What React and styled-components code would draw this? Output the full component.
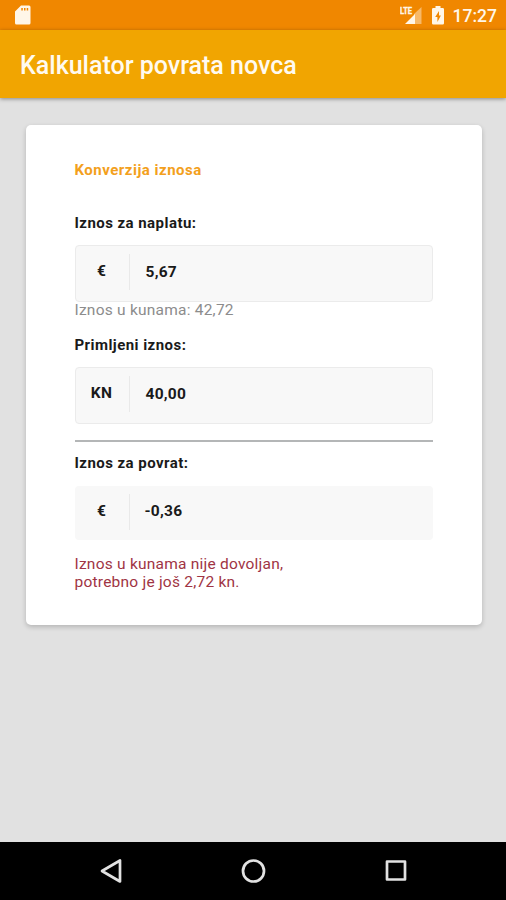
import * as React from 'react';
import styled, { createGlobalStyle } from 'styled-components';

const theme = {
  colors: {
    statusBar: '#f08700',
    appBar: '#f1a501',
    background: '#e1e1e1',
    accent: '#f3a01c',
    text: '#1a1a1a',
    muted: '#8c8c8c',
    error: '#a03444',
    field: '#f8f8f8',
    border: '#ebebeb',
  },
};

const GlobalStyle = createGlobalStyle`
  * {
    box-sizing: border-box;
  }

  body {
    margin: 0;
    font-family: Roboto, 'Liberation Sans', sans-serif;
  }
`;

const Screen = styled.div`
  display: flex;
  flex-direction: column;
  width: 506px;
  height: 900px;
  overflow: hidden;
  background: ${theme.colors.background};
`;

const StatusBar = styled.div`
  display: flex;
  align-items: center;
  flex: 0 0 30px;
  padding: 0 9px 0 15px;
  color: #fff6e8;
  background: ${theme.colors.statusBar};

  svg {
    display: block;
  }
`;

const StatusIcons = styled.div`
  display: flex;
  align-items: center;
  gap: 10px;
  margin-left: auto;
`;

const Clock = styled.span`
  margin-left: -1px;
  padding-top: 2px;
  font-size: 17.5px;
  font-weight: 500;
  line-height: 20px;
`;

const AppBar = styled.header`
  display: flex;
  align-items: center;
  flex: 0 0 68px;
  padding: 4px 20px 0;
  background: ${theme.colors.appBar};
  box-shadow: 0 1px 4px rgba(0, 0, 0, 0.4);
`;

const AppTitle = styled.h1`
  margin: 0;
  color: #fffaf0;
  font-size: 25px;
  font-weight: 500;
  line-height: 30px;
  white-space: nowrap;
`;

const Content = styled.main`
  flex: 1;
  padding: 27px 24px 0 26px;
`;

const Card = styled.section`
  height: 500px;
  padding: 35px 49px 0 48.5px;
  border-radius: 5px;
  background: #fff;
  box-shadow: 0 2px 5px rgba(0, 0, 0, 0.2);
`;

const CardTitle = styled.h2`
  margin: 0 0 33px;
  color: ${theme.colors.accent};
  font-size: 15px;
  font-weight: 700;
  letter-spacing: 0.5px;
  line-height: 20px;
`;

const Label = styled.label`
  display: block;
  margin-bottom: ${({ $gap }) => $gap || 12}px;
  color: ${theme.colors.text};
  font-size: 15px;
  font-weight: 700;
  letter-spacing: 0.45px;
  line-height: 20px;
`;

const Field = styled.div`
  display: flex;
  align-items: center;
  height: ${({ $plain }) => ($plain ? 54 : 57)}px;
  padding-bottom: ${({ $plain }) => ($plain ? 2 : 3)}px;
  border: 1px solid
    ${({ $plain }) => ($plain ? 'transparent' : theme.colors.border)};
  border-radius: 4px;
  background: ${theme.colors.field};
  color: ${theme.colors.text};
  font-size: 15.5px;
  font-weight: 700;
  letter-spacing: 0.25px;
`;

const Currency = styled.span`
  display: flex;
  align-items: center;
  justify-content: center;
  width: 54px;
  height: 36px;
  padding-bottom: ${({ $plain }) => ($plain ? 3 : 2)}px;
  padding-right: 1px;
  border-right: 1px solid #e9e9e9;
`;

const Amount = styled.span`
  padding-left: ${({ $plain }) => ($plain ? 15 : 16)}px;
  padding-bottom: ${({ $plain }) => ($plain ? 3 : 0)}px;
`;

const Helper = styled.p`
  margin: -1px 0 16px;
  color: ${theme.colors.muted};
  font-size: 15.5px;
  letter-spacing: 0.23px;
  line-height: 18px;
`;

const Divider = styled.hr`
  height: 2px;
  margin: 16px 0 11px;
  border: 0;
  background: #b4b6b7;
`;

const ErrorText = styled.p`
  margin: 15px 0 0;
  color: ${theme.colors.error};
  font-size: 15.5px;
  letter-spacing: 0.23px;
  line-height: 18px;
`;

const NavBar = styled.nav`
  display: flex;
  align-items: center;
  justify-content: space-between;
  flex: 0 0 58px;
  padding: 0 96px 0 97px;
  background: #000;
`;

const NavButton = styled.button`
  display: flex;
  padding: 0;
  border: 0;
  background: none;
`;

const SdCardIcon = () => (
  <svg width="16" height="20" viewBox="0 0 16 20">
    <path
      fill="currentColor"
      fillRule="evenodd"
      d="M6 .5h8A1.5 1.5 0 0 1 15.5 2v16a1.5 1.5 0 0 1-1.5 1.5H1.5A1.5 1.5 0 0 1 0 18V6.5zM6.3 3v2.500h1.5V3zM9 3v2.500h1.5V3zM11.700 3v2.500h1.500V3z"
    />
  </svg>
);

const SignalIcon = () => (
  <svg width="22" height="19" viewBox="0 0 22 19">
    <path fill="currentColor" opacity="0.45" d="M21.5 1v17H14V8z" />
    <path fill="currentColor" d="M5 18 15 8v10z" />
    <text
      x="0"
      y="8"
      fill="currentColor"
      stroke="currentColor"
      strokeWidth="0.4"
      fontFamily="Roboto, sans-serif"
      fontSize="9.5"
      fontWeight="700"
      textLength="12"
      lengthAdjust="spacingAndGlyphs"
    >
      LTE
    </text>
  </svg>
);

const BatteryIcon = () => (
  <svg width="12" height="19" viewBox="0 0 12 19">
    <path
      fill="currentColor"
      d="M3.500 0h5v2h2.200A1.300 1.300 0 0 1 12 3.300v14a1.300 1.300 0 0 1-1.300 1.300H1.300A1.300 1.300 0 0 1 0 17.300v-14A1.300 1.300 0 0 1 1.300 2h2.200z"
    />
    <path fill={theme.colors.statusBar} d="M7 5 3.200 11H5.400v5L8.900 9.500H7z" />
  </svg>
);

const NavIcon = ({ children }) => (
  <svg
    width="28"
    height="28"
    viewBox="0 0 28 28"
    fill="none"
    stroke="#e2e2e2"
    strokeWidth="2.7"
    strokeLinejoin="round"
  >
    {children}
  </svg>
);

const MoneyField = ({ currency, value, plain }) => (
  <Field $plain={plain}>
    <Currency $plain={plain}>{currency}</Currency>
    <Amount $plain={plain}>{value}</Amount>
  </Field>
);

const App = () => (
  <>
    <GlobalStyle />
    <Screen>
      <StatusBar>
        <SdCardIcon />
        <StatusIcons>
          <SignalIcon />
          <BatteryIcon />
          <Clock>17:27</Clock>
        </StatusIcons>
      </StatusBar>
      <AppBar>
        <AppTitle>Kalkulator povrata novca</AppTitle>
      </AppBar>
      <Content>
        <Card>
          <CardTitle>Konverzija iznosa</CardTitle>
          <Label>Iznos za naplatu:</Label>
          <MoneyField currency="€" value="5,67" />
          <Helper>Iznos u kunama: 42,72</Helper>
          <Label>Primljeni iznos:</Label>
          <MoneyField currency="KN" value="40,00" />
          <Divider />
          <Label $gap={13}>Iznos za povrat:</Label>
          <MoneyField currency="€" value="-0,36" plain />
          <ErrorText>
            Iznos u kunama nije dovoljan,
            <br />
            potrebno je još 2,72 kn.
          </ErrorText>
        </Card>
      </Content>
      <NavBar>
        <NavButton aria-label="Natrag">
          <NavIcon>
            <path d="M5 14 23 3.5v21z" />
          </NavIcon>
        </NavButton>
        <NavButton aria-label="Početna">
          <NavIcon>
            <circle cx="13.5" cy="14" r="10.5" />
          </NavIcon>
        </NavButton>
        <NavButton aria-label="Nedavno">
          <NavIcon>
            <rect x="5" y="4.5" width="18" height="18" />
          </NavIcon>
        </NavButton>
      </NavBar>
    </Screen>
  </>
);

export default App;
